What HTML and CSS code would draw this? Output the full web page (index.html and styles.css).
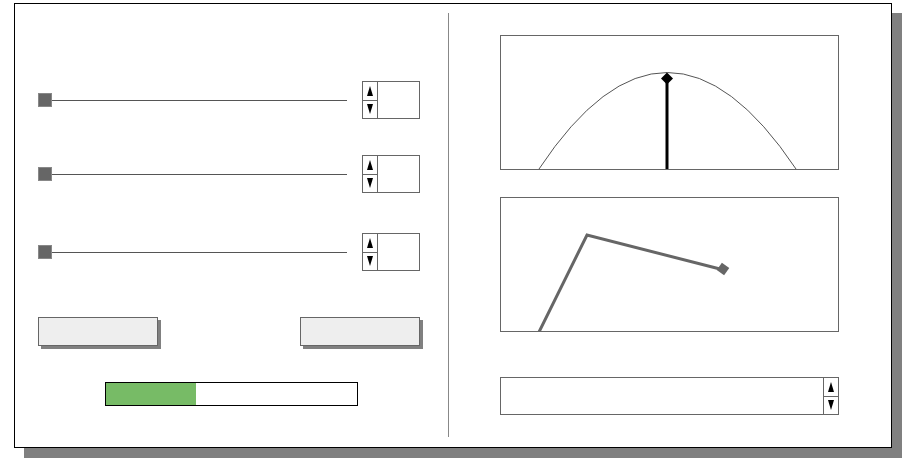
FILE: index.html
```html
<!DOCTYPE html>
<html>
<head>
<meta charset="utf-8">
<link rel="stylesheet" href="styles.css">
</head>
<body>
<div class="window">
  <div class="left">
    <div class="row r1">
      <div class="slider"><span class="handle"></span><span class="track"></span></div>
      <div class="spin">
        <div class="arrows">
          <div class="arr"><svg width="6" height="10" viewBox="0 0 6 10"><polygon points="3,0 6,10 0,10" fill="#000"/></svg></div>
          <div class="arr"><svg width="6" height="10" viewBox="0 0 6 10"><polygon points="0,0 6,0 3,10" fill="#000"/></svg></div>
        </div>
      </div>
    </div>
    <div class="row r2">
      <div class="slider"><span class="handle"></span><span class="track"></span></div>
      <div class="spin">
        <div class="arrows">
          <div class="arr"><svg width="6" height="10" viewBox="0 0 6 10"><polygon points="3,0 6,10 0,10" fill="#000"/></svg></div>
          <div class="arr"><svg width="6" height="10" viewBox="0 0 6 10"><polygon points="0,0 6,0 3,10" fill="#000"/></svg></div>
        </div>
      </div>
    </div>
    <div class="row r3">
      <div class="slider"><span class="handle"></span><span class="track"></span></div>
      <div class="spin">
        <div class="arrows">
          <div class="arr"><svg width="6" height="10" viewBox="0 0 6 10"><polygon points="3,0 6,10 0,10" fill="#000"/></svg></div>
          <div class="arr"><svg width="6" height="10" viewBox="0 0 6 10"><polygon points="0,0 6,0 3,10" fill="#000"/></svg></div>
        </div>
      </div>
    </div>
    <div class="buttons">
      <div class="btn"></div>
      <div class="btn"></div>
    </div>
    <div class="progress"><div class="fill" style="width:90px"></div></div>
  </div>
  <div class="divider"></div>
  <div class="right">
    <div class="chart c1">
      <svg width="337" height="133" viewBox="0 0 337 133">
        <path d="M38 133 Q166 -60 295 133" fill="none" stroke="#555" stroke-width="1"/>
        <line x1="166" y1="46" x2="166" y2="133" stroke="#000" stroke-width="3"/>
        <polygon points="166,36.5 172,42.5 166,48.5 160,42.5" fill="#000"/>
      </svg>
    </div>
    <div class="chart c2">
      <svg width="337" height="133" viewBox="0 0 337 133">
        <polyline points="38,134 86,37 219,71" fill="none" stroke="#666" stroke-width="3" stroke-linejoin="miter"/>
        <rect x="-4.5" y="-4.5" width="9" height="9" fill="#666" transform="translate(222 71) rotate(35)"/>
      </svg>
    </div>
    <div class="wide-spin">
      <div class="field"></div>
      <div class="arrows">
        <div class="arr"><svg width="6" height="10" viewBox="0 0 6 10"><polygon points="3,0 6,10 0,10" fill="#000"/></svg></div>
        <div class="arr"><svg width="6" height="10" viewBox="0 0 6 10"><polygon points="0,0 6,0 3,10" fill="#000"/></svg></div>
      </div>
    </div>
  </div>
</div>
</body>
</html>
```

FILE: styles.css
```css
html, body {
  margin: 0;
  padding: 0;
  background: #fff;
}
body {
  width: 902px;
  height: 460px;
  overflow: hidden;
}
.window {
  margin: 3px 0 0 14px;
  width: 876px;
  height: 443px;
  border: 1px solid #000;
  background: #fff;
  box-shadow: 10px 10px 0 #808080;
  display: flex;
}
.left {
  width: 410px;
  padding-left: 23px;
  display: flex;
  flex-direction: column;
}
.row {
  display: flex;
  align-items: center;
  height: 38px;
}
.r1 { margin-top: 77px; }
.r2 { margin-top: 36px; }
.r3 { margin-top: 40px; }
.slider {
  width: 309px;
  margin-right: 15px;
  display: flex;
  align-items: center;
}
.handle {
  width: 14px;
  height: 14px;
  background: #666;
  box-sizing: border-box;
  border: 1px solid #888;
}
.track {
  flex: 1;
  height: 1px;
  background: #555;
}
.spin {
  width: 58px;
  height: 38px;
  box-sizing: border-box;
  border: 1px solid #666;
  display: flex;
}
.arrows {
  width: 15px;
  box-sizing: border-box;
  display: flex;
  flex-direction: column;
}
.spin .arrows {
  border-right: 1px solid #666;
}
.arr {
  flex: 1;
  display: flex;
  align-items: center;
  justify-content: center;
}
.arr + .arr {
  border-top: 1px solid #666;
}
.arr svg {
  display: block;
}
.buttons {
  margin-top: 46px;
  width: 382px;
  display: flex;
  justify-content: space-between;
}
.btn {
  width: 120px;
  height: 29px;
  box-sizing: border-box;
  border: 1px solid #666;
  background: #eee;
  box-shadow: 3px 3px 0 #808080;
}
.progress {
  margin-top: 36px;
  margin-left: 67px;
  width: 253px;
  height: 24px;
  box-sizing: border-box;
  border: 1px solid #000;
  background: #fff;
}
.fill {
  height: 100%;
  background: #77bb66;
}
.divider {
  width: 1px;
  height: 424px;
  margin-top: 9px;
  background: #888;
}
.right {
  flex: 1;
  padding-left: 51px;
  display: flex;
  flex-direction: column;
}
.chart {
  width: 339px;
  height: 135px;
  box-sizing: border-box;
  border: 1px solid #666;
}
.chart svg {
  display: block;
}
.c1 { margin-top: 31px; }
.c2 { margin-top: 27px; }
.wide-spin {
  margin-top: 45px;
  width: 339px;
  height: 38px;
  box-sizing: border-box;
  border: 1px solid #666;
  display: flex;
}
.field {
  flex: 1;
}
.wide-spin .arrows {
  border-left: 1px solid #666;
}
```
